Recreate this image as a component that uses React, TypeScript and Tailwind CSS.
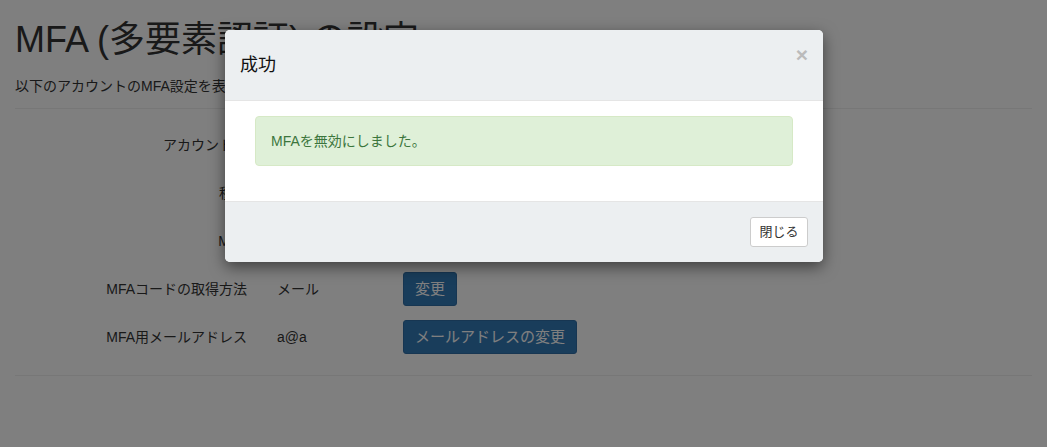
export default function App() {
  const rows: [string, string, string | null][] = [
    ["アカウント名", "user01", null],
    ["種別", "一般", null],
    ["MFA", "無効", null],
    ["MFAコードの取得方法", "メール", "変更"],
    ["MFA用メールアドレス", "a@a", "メールアドレスの変更"],
  ];
  return (
    <div className="relative w-[1047px] h-[447px] bg-white overflow-hidden text-[#333]" style={{ fontFamily: '"Liberation Sans", "Noto Sans CJK JP", sans-serif' }}>
      <div className="px-[15px]">
        <h1 className="text-[36px] leading-[40px] pt-[20px] mb-[16px]">MFA (多要素認証) の設定</h1>
        <p className="text-[14px] leading-[20px]">以下のアカウントのMFA設定を表示しています。</p>
        <hr className="border-[#eee] mt-[12px] mb-[12px]" />
        <div className="flex flex-col">
          {rows.map(([l, v, b]) => (
            <div key={l} className="flex items-center h-[48px] text-[14px]">
              <div className="w-[232px] text-right">{l}</div>
              <div className="w-[156px] pl-[30px]">{v}</div>
              {b && <button className="bg-[#337ab7] border border-[#2e6da4] text-white text-[15px] rounded-[3px] px-[11px] h-[34px]">{b}</button>}
            </div>
          ))}
        </div>
        <hr className="border-[#eee] mt-[14px]" />
      </div>
      <div className="absolute inset-0 bg-black/50" />
      <div className="absolute left-[225px] top-[30px] w-[598px] rounded-[5px] overflow-hidden shadow-[0_5px_15px_rgba(0,0,0,0.5)] bg-white">
        <div className="h-[71px] bg-[#eceff1] border-b border-[#e5e5e5] flex items-center justify-between px-[15px]">
          <span className="text-[18px] text-[#111]">成功</span>
          <span className="text-[21px] font-bold text-[#bbb] -mt-[20px]">×</span>
        </div>
        <div className="h-[100px] px-[30px] pt-[15px]">
          <div className="h-[50px] bg-[#dff0d8] border border-[#d6e9c6] rounded-[4px] text-[#3c763d] text-[14px] flex items-center px-[15px]">MFAを無効にしました。</div>
        </div>
        <div className="h-[61px] bg-[#eceff1] border-t border-[#e5e5e5] flex items-center justify-end px-[15px]">
          <button className="bg-white border border-[#ccc] rounded-[3px] h-[30px] w-[58px] text-[13px] text-[#333]">閉じる</button>
        </div>
      </div>
    </div>
  );
}
